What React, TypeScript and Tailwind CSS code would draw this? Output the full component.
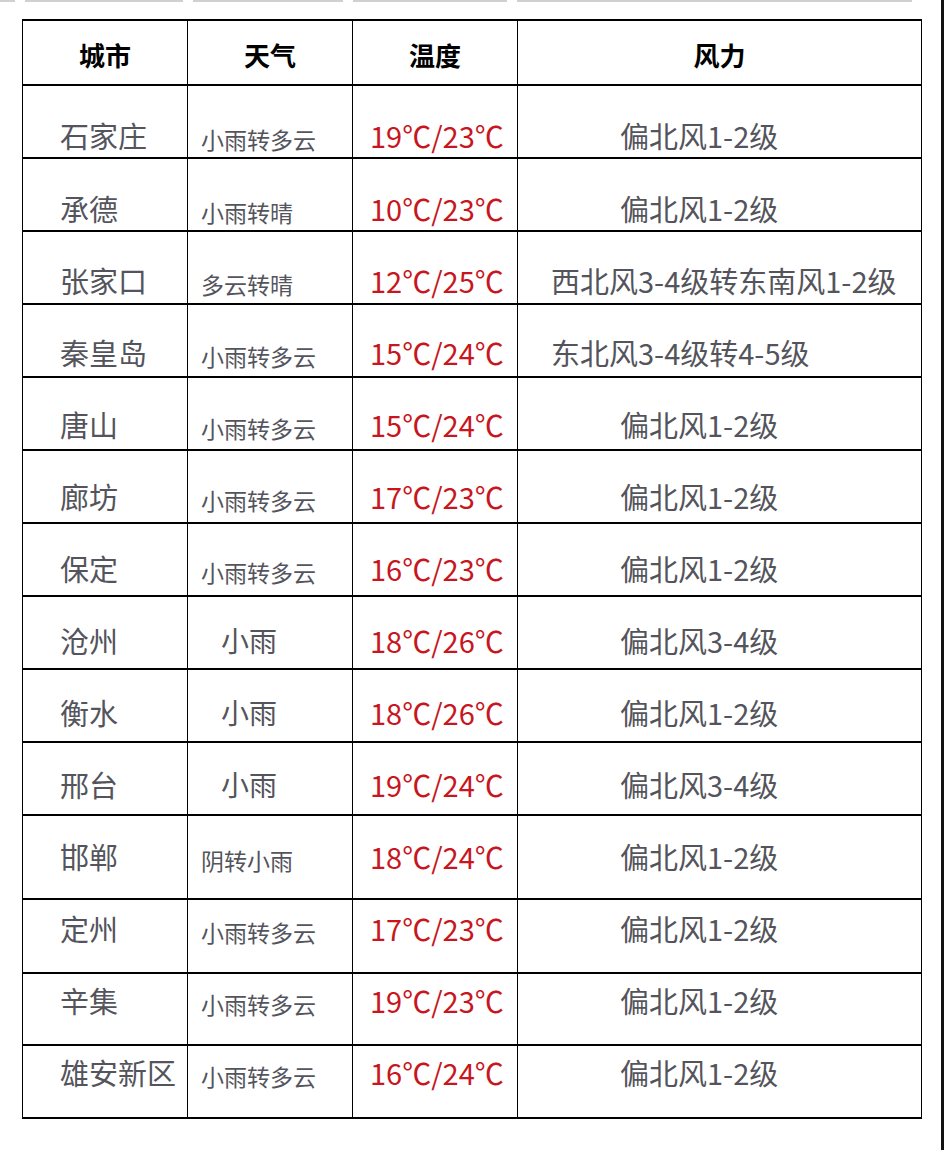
const rows = [
  { city: '石家庄', weather: '小雨转多云', temp: '19℃/23℃', wind: '偏北风1-2级', h: 'h-[73px]', pt: 'pt-[31px]', wpl: 'pl-[13px]', npl: 'pl-[102px]' },
  { city: '承德', weather: '小雨转晴', temp: '10℃/23℃', wind: '偏北风1-2级', h: 'h-[73px]', pt: 'pt-[31px]', wpl: 'pl-[13px]', npl: 'pl-[102px]' },
  { city: '张家口', weather: '多云转晴', temp: '12℃/25℃', wind: '西北风3-4级转东南风1-2级', h: 'h-[73px]', pt: 'pt-[30px]', wpl: 'pl-[13px]', npl: 'pl-[33px]' },
  { city: '秦皇岛', weather: '小雨转多云', temp: '15℃/24℃', wind: '东北风3-4级转4-5级', h: 'h-[73px]', pt: 'pt-[29px]', wpl: 'pl-[13px]', npl: 'pl-[33px]' },
  { city: '唐山', weather: '小雨转多云', temp: '15℃/24℃', wind: '偏北风1-2级', h: 'h-[73px]', pt: 'pt-[28px]', wpl: 'pl-[13px]', npl: 'pl-[102px]' },
  { city: '廊坊', weather: '小雨转多云', temp: '17℃/23℃', wind: '偏北风1-2级', h: 'h-[73px]', pt: 'pt-[27px]', wpl: 'pl-[13px]', npl: 'pl-[102px]' },
  { city: '保定', weather: '小雨转多云', temp: '16℃/23℃', wind: '偏北风1-2级', h: 'h-[73px]', pt: 'pt-[26px]', wpl: 'pl-[13px]', npl: 'pl-[102px]' },
  { city: '沧州', weather: '小雨', temp: '18℃/26℃', wind: '偏北风3-4级', h: 'h-[73px]', pt: 'pt-[25px]', wpl: 'pl-[33px]', npl: 'pl-[102px]', big: true },
  { city: '衡水', weather: '小雨', temp: '18℃/26℃', wind: '偏北风1-2级', h: 'h-[73px]', pt: 'pt-[24px]', wpl: 'pl-[33px]', npl: 'pl-[102px]', big: true },
  { city: '邢台', weather: '小雨', temp: '19℃/24℃', wind: '偏北风3-4级', h: 'h-[73px]', pt: 'pt-[23px]', wpl: 'pl-[33px]', npl: 'pl-[102px]', big: true },
  { city: '邯郸', weather: '阴转小雨', temp: '18℃/24℃', wind: '偏北风1-2级', h: 'h-[84px]', pt: 'pt-[22px]', wpl: 'pl-[13px]', npl: 'pl-[102px]' },
  { city: '定州', weather: '小雨转多云', temp: '17℃/23℃', wind: '偏北风1-2级', h: 'h-[74px]', pt: 'pt-[10px]', wpl: 'pl-[13px]', npl: 'pl-[102px]' },
  { city: '辛集', weather: '小雨转多云', temp: '19℃/23℃', wind: '偏北风1-2级', h: 'h-[72px]', pt: 'pt-[8px]', wpl: 'pl-[13px]', npl: 'pl-[102px]' },
  { city: '雄安新区', weather: '小雨转多云', temp: '16℃/24℃', wind: '偏北风1-2级', h: 'h-[73px]', pt: 'pt-[8px]', wpl: 'pl-[13px]', npl: 'pl-[102px]' },
]

export default function App() {
  return (
    <div className="flex w-[944px] h-[1150px] bg-white font-['Noto_Sans_CJK_SC',sans-serif]">
      <main className="w-[941px] flex flex-col">
        {/* leftover rule from the table above */}
        <div className="flex h-[2px] gap-[10px]">
          <div className="w-[15px] bg-[#d0d0d0]" />
          <div className="w-[158px] bg-[#d0d0d0]" />
          <div className="w-[150px] bg-[#d0d0d0]" />
          <div className="w-[154px] bg-[#d0d0d0]" />
          <div className="w-[395px] bg-[#d0d0d0]" />
        </div>

        <div className="ml-[22px] mt-[17px] w-[900px] border-t-2 border-l border-r border-black">
          {/* Header */}
          <div className="flex h-[65px] border-b-2 border-black text-[26px] font-bold text-black">
            <div className="w-[165px] border-r border-black flex items-center justify-center pt-[4px]">城市</div>
            <div className="w-[165px] border-r border-black flex items-center justify-center pt-[4px]">天气</div>
            <div className="w-[165px] border-r border-black flex items-center justify-center pt-[4px]">温度</div>
            <div className="flex-1 flex items-center justify-center pt-[4px]">风力</div>
          </div>

          {rows.map((r) => (
            <div key={r.city} className={`flex ${r.h} border-b-2 border-black leading-[36px] text-[#54545c]`}>
              <div className={`w-[165px] border-r border-black pl-[37px] text-[29px] ${r.pt}`}>{r.city}</div>
              <div className={`w-[165px] border-r border-black ${r.pt} ${r.wpl}`}>
                {r.big ? (
                  <span className="block text-[28px]">{r.weather}</span>
                ) : (
                  <span className="block mt-[4px] text-[23px]">{r.weather}</span>
                )}
              </div>
              <div className={`w-[165px] border-r border-black pl-[17px] text-[29px] text-[#c8161e] ${r.pt}`}>{r.temp}</div>
              <div className={`flex-1 text-[29px] ${r.pt} ${r.npl}`}>{r.wind}</div>
            </div>
          ))}
        </div>
      </main>
      <div className="w-[3px] bg-[#111]" />
    </div>
  )
}
